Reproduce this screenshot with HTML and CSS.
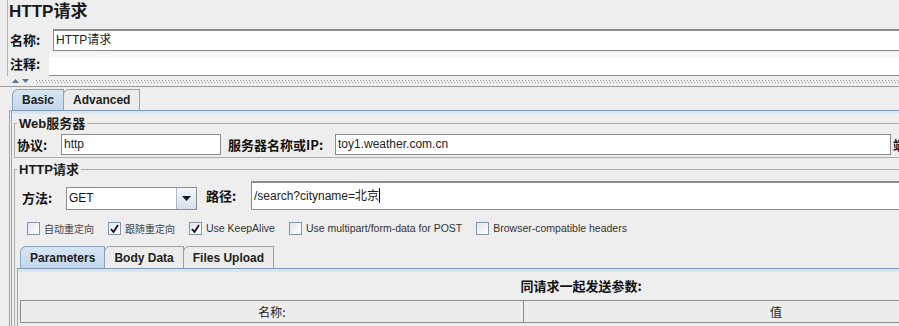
FILE: index.html
```html
<html lang="zh-CN">
<head>
  <meta charset="UTF-8" />
  <title>HTTP请求</title>
  <link rel="stylesheet" href="styles.css">
</head>

<body>
  <div class="screen">

    <div class="top">
      <div class="title">HTTP请求</div>
      <div class="row name-row">
        <span class="lbl name-lbl">名称:</span>
        <div class="field name-field">HTTP请求</div>
      </div>
      <div class="row comment-row">
        <span class="lbl comment-lbl">注释:</span>
        <div class="field comment-field"></div>
      </div>
    </div>

    <!-- separateur -->
    <div class="splitter">
      <span class="arrows">
        <svg width="22" height="6" viewBox="0 0 22 6"><path d="M1 5 L4.5 1 L8 5 Z M11 1 L18 1 L14.5 5 Z" fill="#5f7590"/></svg>
      </span>
      <div class="dots"></div>
    </div>

    <div class="tabbar outer-tabs">
      <div class="tab selected">Basic</div>
      <div class="tab">Advanced</div>
    </div>

    <div class="tabpanel outer-panel">

      <fieldset class="group web-group">
        <legend>Web服务器</legend>
        <div class="row server-row">
          <span class="lbl proto-lbl">协议:</span>
          <div class="field proto-field">http</div>
          <span class="lbl host-lbl">服务器名称或IP:</span>
          <div class="field host-field">toy1.weather.com.cn</div>
          <span class="lbl port-lbl">端口号:</span>
        </div>
      </fieldset>

      <fieldset class="group http-group">
        <legend>HTTP请求</legend>
        <div class="row method-row">
          <span class="lbl method-lbl">方法:</span>
          <div class="combo">
            <span class="combo-value">GET</span>
            <span class="combo-btn">
              <svg width="9" height="5" viewBox="0 0 9 5"><path d="M0 0 L9 0 L4.5 5 Z" fill="#1a1a1a"/></svg>
            </span>
          </div>
          <span class="lbl path-lbl">路径:</span>
          <div class="field path-field">/search?cityname=北京<span class="caret"></span></div>
        </div>

        <div class="checks">
          <label class="check"><span class="box"></span><span class="cjk">自动重定向</span></label>
          <label class="check"><span class="box checked"><svg width="9" height="9" viewBox="0 0 9 9"><path d="M1 5 L3.5 8 L8 1" stroke="#111" stroke-width="1.8" fill="none"/></svg></span><span class="cjk">跟随重定向</span></label>
          <label class="check"><span class="box checked"><svg width="9" height="9" viewBox="0 0 9 9"><path d="M1 5 L3.5 8 L8 1" stroke="#111" stroke-width="1.8" fill="none"/></svg></span>Use KeepAlive</label>
          <label class="check"><span class="box"></span>Use multipart/form-data for POST</label>
          <label class="check"><span class="box"></span>Browser-compatible headers</label>
        </div>

        <div class="tabbar inner-tabs">
          <div class="tab selected">Parameters</div>
          <div class="tab">Body Data</div>
          <div class="tab">Files Upload</div>
        </div>

        <div class="tabpanel inner-panel">
          <div class="params-title">同请求一起发送参数:</div>
          <div class="table">
            <div class="th th-name">名称:</div>
            <div class="th th-value">值</div>
          </div>
        </div>
      </fieldset>

    </div>
  </div>
</body>
</html>
```

FILE: styles.css
```css
body {
  margin: 0;
  background: #eeeeee;
  overflow: hidden;
  font-family: "Liberation Sans", "Noto Sans CJK SC", sans-serif;
  font-size: 12px;
  color: #111;
}

.screen {
  width: 1150px;
  height: 326px;
}

.lbl {
  font-weight: bold;
  font-size: 13px;
  white-space: nowrap;
  font-family: "Noto Sans CJK SC", "Liberation Sans", sans-serif;
}

.row {
  display: flex;
  align-items: center;
}

.field {
  background: #fff;
  border: 1px solid #8c8c8c;
  box-sizing: border-box;
  padding-left: 2px;
  white-space: nowrap;
  font-family: "Liberation Sans", "Noto Sans CJK SC", sans-serif;
  font-size: 12px;
  line-height: 19px;
  color: #222;
}

/* haut : titre, nom, commentaire */
.top {
  margin-left: 7px;
  border-left: 1px solid #b4b4b4;
  height: 76px;
}

.title {
  height: 28px;
  padding-left: 1px;
  font-family: "Liberation Sans", "Noto Sans CJK SC", sans-serif;
  font-weight: bold;
  font-size: 17px;
  line-height: 24px;
  color: #1a1a1a;
}

.name-row {
  height: 23px;
  align-items: flex-start;
}

.name-lbl {
  width: 45px;
  padding-left: 2px;
  box-sizing: border-box;
  line-height: 23px;
}

.name-field {
  flex: 1;
  margin-top: 1px;
  height: 22px;
  border-top: 2px solid #8c8c8c;
}

.comment-row {
  height: 25px;
  align-items: flex-start;
}

.comment-lbl {
  width: 41px;
  padding-left: 2px;
  box-sizing: border-box;
  line-height: 25px;
}

.comment-field {
  flex: 1;
  margin-top: 1px;
  height: 24px;
  border: none;
  border-bottom: 1px solid #8c8c8c;
  background: linear-gradient(#f5f5f5 0 5px, #fff 5px);
}

/* separateur pointille */
.splitter {
  height: 10px;
  border-bottom: 1px solid #9a9a9a;
  display: flex;
  align-items: center;
  padding-left: 11px;
  gap: 3px;
}

.arrows {
  display: flex;
  height: 6px;
}

.dots {
  flex: 1;
  height: 3px;
  background:
    repeating-linear-gradient(90deg, #9a9a9a 0 1px, transparent 1px 3px) 0 0 / 100% 1px no-repeat,
    repeating-linear-gradient(90deg, transparent 0 1px, #9a9a9a 1px 2px, transparent 2px 3px) 0 2px / 100% 1px no-repeat;
}

/* onglets */
.tabbar {
  display: flex;
  align-items: flex-end;
}

.outer-tabs {
  height: 23px;
  padding-left: 12px;
}

.tab {
  height: 20px;
  padding: 0 9px;
  border: 1px solid #a0a0a0;
  border-bottom: none;
  border-top-left-radius: 6px;
  font-weight: bold;
  font-size: 12px;
  line-height: 21px;
  color: #222;
  background: #ececec;
  margin-right: -1px;
}

.tab.selected {
  background: linear-gradient(#d7e5f3, #c3d8ee);
  border-color: #8ea4bd;
  position: relative;
  z-index: 1;
}

.tabpanel {
  border-top: 1px solid #7d97b1;
  background: linear-gradient(#d8e5f2 0 3px, #eeeeee 3px);
}

.outer-panel {
  margin-left: 9px;
  border-left: 3px double #a4a4a4;
  height: 215px;
  padding-left: 2px;
}

/* groupes */
.group {
  margin: 0;
  padding: 0 0 0 2px;
  border: 1px solid #acacac;
  min-width: 0;
}

.group legend {
  padding: 0 2px;
  font-family: "Liberation Sans", "Noto Sans CJK SC", sans-serif;
  font-weight: bold;
  font-size: 13px;
  line-height: 15px;
  color: #1a1a1a;
}

.web-group {
  margin-top: 5px;
  padding-top: 3px;
  padding-bottom: 2px;
}

.server-row {
  height: 21px;
}

.proto-lbl {
  width: 44px;
}

.proto-field {
  width: 160px;
  height: 21px;
}

.host-lbl {
  width: 107px;
  margin-left: 7px;
}

.host-field {
  width: 556px;
  height: 21px;
}

.port-lbl {
  margin-left: 2px;
}

.http-group {
  margin-top: 4px;
  padding-top: 4px;
  border-bottom: none;
}

.method-row {
  height: 29px;
  padding-left: 5px;
  align-items: flex-start;
}

.method-lbl {
  width: 44px;
  line-height: 33px;
}

.combo {
  margin-top: 6px;
  width: 131px;
  height: 23px;
  box-sizing: border-box;
  border: 1px solid #8c8c8c;
  background: #fff;
  display: flex;
}

.combo-value {
  flex: 1;
  padding-left: 2px;
  line-height: 21px;
  font-size: 12px;
}

.combo-btn {
  width: 19px;
  border-left: 1px solid #a9b6c5;
  background: linear-gradient(#f4f7fa, #d6e0eb);
  display: flex;
  align-items: center;
  justify-content: center;
}

.path-lbl {
  width: 45px;
  margin-left: 9px;
  line-height: 29px;
}

.path-field {
  flex: 1;
  height: 29px;
  line-height: 27px;
  border-top: 2px solid #8c8c8c;
  border-left: 1px solid #8c8c8c;
  border-right: none;
}

.caret {
  display: inline-block;
  width: 1px;
  height: 15px;
  background: #000;
  vertical-align: -3px;
}

/* cases a cocher */
.checks {
  display: flex;
  align-items: center;
  height: 14px;
  margin-top: 11px;
  padding-left: 10px;
  gap: 14px;
  font-size: 10.5px;
  color: #333;
}

.check {
  display: flex;
  align-items: center;
  gap: 4px;
  white-space: nowrap;
}

.check .cjk {
  font-family: "Noto Sans CJK SC", sans-serif;
  font-size: 10px;
  color: #444;
}

.box {
  width: 13px;
  height: 13px;
  box-sizing: border-box;
  border: 1px solid #8595a8;
  background: linear-gradient(135deg, #dfe7f1, #ffffff);
  display: flex;
  align-items: center;
  justify-content: center;
}

/* onglets internes */
.inner-tabs {
  height: 23px;
  margin-top: 10px;
  padding-left: 3px;
}

.inner-tabs .tab {
  height: 21px;
  line-height: 22px;
}

.inner-panel {
  height: 60px;
  border-left: 1px solid #a4a4a4;
  padding: 8px 0 0 2px;
}

.params-title {
  width: 1122px;
  text-align: center;
  font-family: "Noto Sans CJK SC", sans-serif;
  font-weight: bold;
  font-size: 13px;
  line-height: 17px;
}

.table {
  margin-top: 6px;
  width: 1009px;
  height: 23px;
  box-sizing: border-box;
  border: 1px solid #8c8c8c;
  display: flex;
}

.th {
  flex: 1;
  text-align: center;
  font-family: "Noto Sans CJK SC", sans-serif;
  font-size: 12px;
  line-height: 21px;
  background: #ededed;
  color: #222;
}

.th-name {
  flex: 0 0 502px;
  border-right: 1px solid #8c8c8c;
}
```
